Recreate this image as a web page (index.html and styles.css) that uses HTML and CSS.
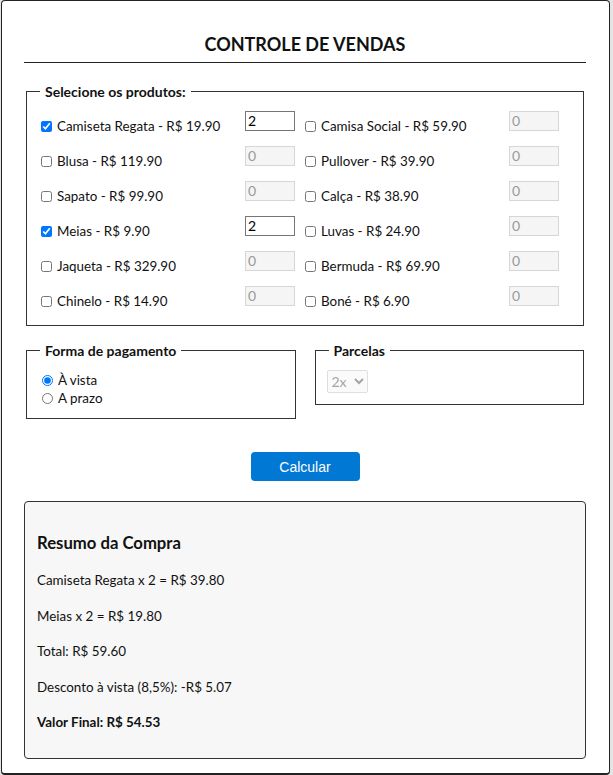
FILE: index.html
```html
<!DOCTYPE html>
<html lang="pt-BR">
<head>
<meta charset="utf-8">
<title>Controle de Vendas</title>
<link rel="stylesheet" href="styles.css">
</head>
<body>
<div class="app">
  <h1 class="title">CONTROLE DE VENDAS</h1>

  <fieldset class="box products">
    <legend>Selecione os produtos:</legend>
    <div class="grid">
      <label class="item"><input type="checkbox" checked><span>Camiseta Regata - R$ 19.90</span></label>
      <div class="qty-cell"><input class="qty" type="text" value="2"></div>
      <label class="item"><input type="checkbox"><span>Camisa Social - R$ 59.90</span></label>
      <div class="qty-cell"><input class="qty" type="text" value="0" disabled></div>

      <label class="item"><input type="checkbox"><span>Blusa - R$ 119.90</span></label>
      <div class="qty-cell"><input class="qty" type="text" value="0" disabled></div>
      <label class="item"><input type="checkbox"><span>Pullover - R$ 39.90</span></label>
      <div class="qty-cell"><input class="qty" type="text" value="0" disabled></div>

      <label class="item"><input type="checkbox"><span>Sapato - R$ 99.90</span></label>
      <div class="qty-cell"><input class="qty" type="text" value="0" disabled></div>
      <label class="item"><input type="checkbox"><span>Calça - R$ 38.90</span></label>
      <div class="qty-cell"><input class="qty" type="text" value="0" disabled></div>

      <label class="item"><input type="checkbox" checked><span>Meias - R$ 9.90</span></label>
      <div class="qty-cell"><input class="qty" type="text" value="2"></div>
      <label class="item"><input type="checkbox"><span>Luvas - R$ 24.90</span></label>
      <div class="qty-cell"><input class="qty" type="text" value="0" disabled></div>

      <label class="item"><input type="checkbox"><span>Jaqueta - R$ 329.90</span></label>
      <div class="qty-cell"><input class="qty" type="text" value="0" disabled></div>
      <label class="item"><input type="checkbox"><span>Bermuda - R$ 69.90</span></label>
      <div class="qty-cell"><input class="qty" type="text" value="0" disabled></div>

      <label class="item"><input type="checkbox"><span>Chinelo - R$ 14.90</span></label>
      <div class="qty-cell"><input class="qty" type="text" value="0" disabled></div>
      <label class="item"><input type="checkbox"><span>Boné - R$ 6.90</span></label>
      <div class="qty-cell"><input class="qty" type="text" value="0" disabled></div>
    </div>
  </fieldset>

  <div class="pay-row">
    <fieldset class="box pay">
      <legend>Forma de pagamento</legend>
      <label class="radio"><input type="radio" name="pg" checked><span>À vista</span></label>
      <label class="radio"><input type="radio" name="pg"><span>A prazo</span></label>
    </fieldset>
    <fieldset class="box parcelas">
      <legend>Parcelas</legend>
      <select class="sel" disabled><option>2x</option></select>
    </fieldset>
  </div>

  <div class="actions"><button class="btn" type="button">Calcular</button></div>

  <div class="summary">
    <h3 class="sum-title">Resumo da Compra</h3>
    <p>Camiseta Regata x 2 = R$ 39.80</p>
    <p>Meias x 2 = R$ 19.80</p>
    <p>Total: R$ 59.60</p>
    <p>Desconto à vista (8,5%): -R$ 5.07</p>
    <p class="final">Valor Final: R$ 54.53</p>
  </div>
</div>
</body>
</html>
```
FILE: styles.css
```css
html, body {
  margin: 0;
  padding: 0;
}
body {
  background: #e4e4e4;
  font-family: Lato, "Open Sans", sans-serif;
  font-size: 13.4px;
  color: #111;
}
.app {
  box-sizing: border-box;
  width: 609px;
  height: 775px;
  margin-left: 1px;
  background: #fff;
  border: 1px solid #222;
  border-bottom-width: 2px;
  border-radius: 4px;
  padding: 31px 23px 0 22px;
}
.title {
  margin: 0;
  font-size: 18px;
  line-height: 24px;
  font-weight: 700;
  text-align: center;
  padding-bottom: 6px;
  border-bottom: 1px solid #222;
}
.box {
  margin: 0 2px;
  border: 1px solid #333;
  padding: 10px 10px 14px 10px;
  min-width: 0;
}
.box legend {
  font-weight: 700;
  font-size: 14px;
  line-height: 19px;
  padding: 0 5px;
  margin-left: 3px;
}
.products {
  margin-top: 19px;
}
.grid {
  display: grid;
  grid-template-columns: 208px 56px 208px 50px;
  grid-auto-rows: 25px;
  row-gap: 10px;
}
.item {
  display: flex;
  align-items: center;
  height: 20px;
  margin-top: 5px;
  line-height: 20px;
}
.item input {
  margin: 0 5px 0 4px;
  width: 11px;
  height: 11px;
}
.qty {
  box-sizing: border-box;
  width: 50px;
  height: 20px;
  padding: 0 2px 2px;
  font-family: inherit;
  font-size: 14px;
  line-height: 16px;
  border: 1px solid #767676;
  color: #000;
}
.qty:disabled {
  border-color: #d6d6d6;
  background: #f5f5f5;
  color: #9a9a9a;
}
.pay-row {
  display: flex;
  align-items: flex-start;
  gap: 15px;
  margin-top: 15px;
}
.pay-row .box {
  flex: 1;
}
.pay {
  padding: 11px 10px 11px;
}
.parcelas {
  padding: 10px 10px 11px;
}
.radio {
  display: flex;
  align-items: center;
  height: 18px;
  line-height: 18px;
}
.radio input {
  margin: 0 5px 0 5px;
  width: 11px;
  height: 11px;
}
.sel {
  width: 41px;
  height: 23px;
  font-family: inherit;
  font-size: 14px;
  margin-left: 1px;
}
.actions {
  display: flex;
  justify-content: center;
  margin-top: 33px;
}
.btn {
  width: 109px;
  height: 29px;
  background: #0078d4;
  color: #fff;
  border: none;
  border-radius: 4px;
  font-family: "Liberation Sans", Arial, sans-serif;
  font-size: 14px;
  padding: 0;
}
.summary {
  margin-top: 20px;
  background: #f7f7f7;
  border: 1px solid #333;
  border-radius: 4px;
  padding: 30px 12px 10px;
}
.sum-title {
  margin: 0 0 16px;
  font-size: 16.7px;
  line-height: 22px;
  font-weight: 700;
}
.summary p {
  margin: 0 0 15.5px;
  line-height: 20px;
}
.summary .final {
  font-weight: 700;
}
```
